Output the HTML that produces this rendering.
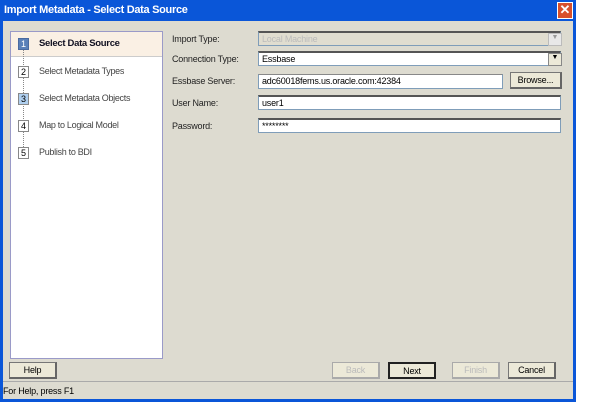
<!DOCTYPE html><html><head><style>
body{margin:0;width:616px;height:404px;background:#fff;font-family:"Liberation Sans",sans-serif;font-size:11px;position:relative;overflow:hidden}
.a{position:absolute}
#win{left:0;top:0;width:576px;height:402px;background:#0a56d8}
#body{left:3px;top:21px;width:570px;height:378px;background:#dddbd0}
#title{left:4px;top:4px;color:#fff;font-size:11px;font-weight:bold;letter-spacing:-.3px}
.inp{background:#fff;border:1px solid #7f9db9;border-top:2px solid #555;box-sizing:border-box;height:15px;font-size:9px;padding:1px 3px;color:#000;letter-spacing:-.2px}
.btn{background:#ece9d8;border:1px solid #777;box-sizing:border-box;height:17px;text-align:center;font-size:9px;line-height:15px;border-right:2px solid #666;border-bottom:2px solid #666;letter-spacing:-.2px}
.lab{font-size:9px;color:#222;letter-spacing:-.2px}
.step{left:7px;width:11px;height:12px;border:1px solid #888;box-sizing:border-box;background:#fff;font-size:9px;text-align:center;line-height:10px}
.st{left:28px;font-size:9px;color:#444;letter-spacing:-.3px}
</style></head><body>
<div class="a" id="win"></div>
<div class="a" id="title">Import Metadata - Select Data Source</div>
<div class="a" style="left:557px;top:2px;width:16px;height:17px;background:#d8502c;border:1px solid #fff;box-sizing:border-box;color:#fff;font-weight:bold;text-align:center;line-height:14px;font-size:13px">✕</div>
<div class="a" id="body"></div>
<div class="a" style="left:10px;top:31px;width:153px;height:328px;background:#fff;border:1px solid #9a9ac8;box-sizing:border-box">
 <div class="a" style="left:0;top:0;width:151px;height:24px;background:#faf0e4;border-bottom:1px solid #ccc"></div>
 <div class="a" style="left:12px;top:12px;width:0;height:105px;border-left:1px dotted #888"></div>
 <div class="a step" style="top:6px;background:#5a80b8;color:#fff;border-color:#4a6aa0">1</div>
 <div class="a st" style="top:6px;font-weight:bold;color:#112;font-size:9.5px">Select Data Source</div>
 <div class="a step" style="top:34px">2</div><div class="a st" style="top:34px">Select Metadata Types</div>
 <div class="a step" style="top:61px;background:#b0d0f0">3</div><div class="a st" style="top:61px">Select Metadata Objects</div>
 <div class="a step" style="top:88px">4</div><div class="a st" style="top:88px">Map to Logical Model</div>
 <div class="a step" style="top:115px">5</div><div class="a st" style="top:115px">Publish to BDI</div>
</div>
<div class="a lab" style="left:172px;top:34px">Import Type:</div>
<div class="a lab" style="left:172px;top:54px">Connection Type:</div>
<div class="a lab" style="left:172px;top:76px">Essbase Server:</div>
<div class="a lab" style="left:172px;top:98px">User Name:</div>
<div class="a lab" style="left:172px;top:121px">Password:</div>
<div class="a inp" style="left:258px;top:31px;width:303px;background:#e0ddd0;color:#bbb">Local Machine</div>
<div class="a" style="left:548px;top:33px;width:12px;height:11px;background:#e8e8e8;border:1px solid #bbb;font-size:7px;text-align:center;color:#999">▼</div>
<div class="a inp" style="left:258px;top:51px;width:303px">Essbase</div>
<div class="a" style="left:548px;top:53px;width:12px;height:11px;background:#ece9d8;border:1px solid #888;font-size:7px;text-align:center">▼</div>
<div class="a inp" style="left:258px;top:74px;width:245px;border-top:1px solid #888">adc60018fems.us.oracle.com:42384</div>
<div class="a btn" style="left:510px;top:72px;width:52px">Browse...</div>
<div class="a inp" style="left:258px;top:95px;width:303px">user1</div>
<div class="a inp" style="left:258px;top:118px;width:303px">********</div>
<div class="a btn" style="left:9px;top:362px;width:48px">Help</div>
<div class="a btn" style="left:332px;top:362px;width:48px;color:#bbb;border-color:#aaa">Back</div>
<div class="a btn" style="left:388px;top:362px;width:48px;border:2px solid #222">Next</div>
<div class="a btn" style="left:452px;top:362px;width:48px;color:#bbb;border-color:#aaa">Finish</div>
<div class="a btn" style="left:508px;top:362px;width:48px">Cancel</div>
<div class="a" style="left:3px;top:381px;width:570px;border-top:1px solid #aaa"></div>
<div class="a" style="left:3px;top:386px;font-size:9px;letter-spacing:-.2px">For Help, press F1</div>
</body></html>
